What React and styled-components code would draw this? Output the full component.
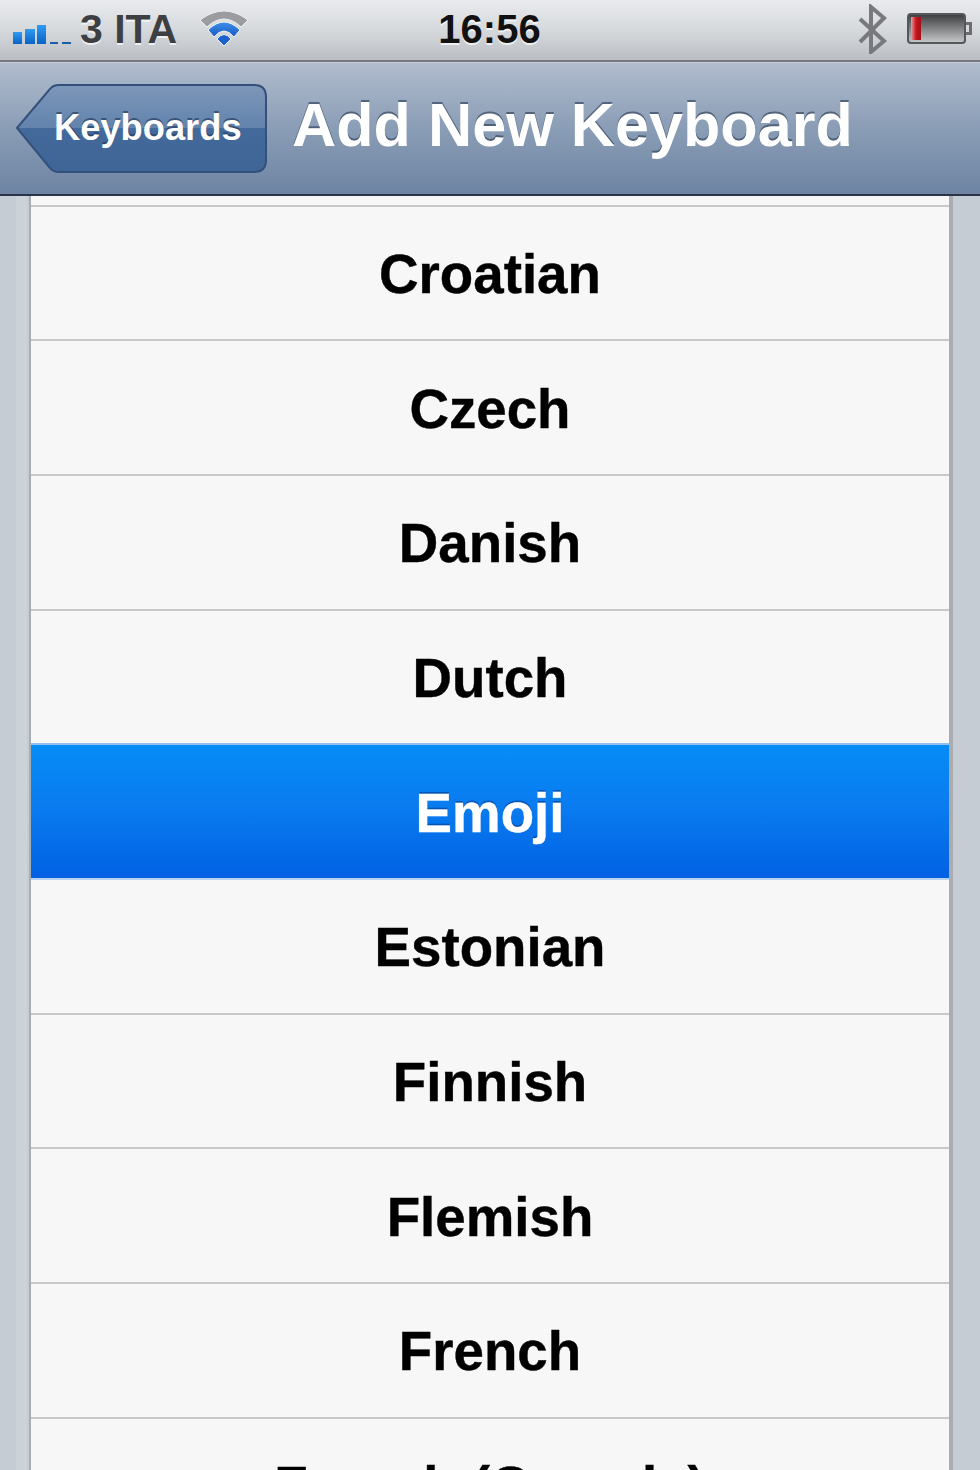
import React from 'react';
import styled, { createGlobalStyle } from 'styled-components';

const Global = createGlobalStyle`
  html, body {
    margin: 0;
    padding: 0;
    background: #c5ccd4;
  }
  * {
    box-sizing: border-box;
  }
`;

const Screen = styled.div`
  width: 980px;
  height: 1470px;
  overflow: hidden;
  display: flex;
  flex-direction: column;
  font-family: 'Liberation Sans', Arial, sans-serif;
`;

const StatusBar = styled.div`
  height: 62px;
  flex: none;
  display: grid;
  grid-template-columns: 1fr auto 1fr;
  align-items: center;
  padding: 0 7px 2px 12px;
  background: linear-gradient(#e9ebee, #d6d9dc 50%, #babec3);
  border-bottom: 2px solid #74787d;
`;

const StatusLeft = styled.div`
  display: flex;
  align-items: center;
`;

const StatusRight = styled.div`
  display: flex;
  align-items: center;
  justify-content: flex-end;
  gap: 20px;
`;

const Carrier = styled.span`
  margin: 0 22px 0 8px;
  font-size: 41px;
  font-weight: 700;
  color: #3d3f43;
  text-shadow: 0 2px 0 rgba(255, 255, 255, 0.7);
`;

const Clock = styled.span`
  margin-left: -6px;
  font-size: 40px;
  font-weight: 700;
  color: #111;
  text-shadow: 0 2px 0 rgba(255, 255, 255, 0.7);
`;

const NavBar = styled.div`
  height: 134px;
  flex: none;
  display: flex;
  align-items: center;
  gap: 25px;
  padding: 0 0 0 15px;
  background: linear-gradient(#b0bccd, #8a9db6 50%, #6d84a2);
  border-top: 1px solid #c5cfdb;
  border-bottom: 2px solid #2b3446;
`;

const BackButton = styled.button`
  position: relative;
  width: 252px;
  height: 89px;
  flex: none;
  padding: 0 0 2px 39px;
  border: 0;
  background: none;
  font: 700 36.3px 'Liberation Sans', Arial, sans-serif;
  color: #fff;
  text-align: left;
  text-shadow: 0 -2px 0 rgba(30, 50, 80, 0.6);
`;

const BackShape = styled.svg`
  position: absolute;
  top: 0;
  left: 0;
`;

const BackLabel = styled.span`
  position: relative;
`;

const Title = styled.h1`
  margin: 0 0 8px;
  font-size: 61.2px;
  font-weight: 700;
  color: #fff;
  white-space: nowrap;
  text-shadow: 0 -2px 0 rgba(40, 55, 80, 0.6);
`;

const Content = styled.div`
  flex: 1;
  min-height: 0;
  padding: 0 27px 0 29px;
  background: linear-gradient(
    90deg,
    #c5ccd4 16px,
    #cbd2d8 16px,
    #cbd2d8 27px,
    #c5ccd4 27px
  );
`;

const List = styled.div`
  height: 100%;
  overflow: hidden;
  background: #f7f7f7;
  border-left: 2px solid #a9acb0;
  border-right: 4px solid #a9acb0;
`;

const Sliver = styled.div`
  height: 10.6px;
  background: #f7f7f7;
  border-bottom: 2px solid #c8c8c8;
`;

const Row = styled.div`
  position: relative;
  height: 134.7px;
  display: flex;
  align-items: center;
  justify-content: center;
  padding-top: 2px;
  font-size: 54.7px;
  font-weight: 700;
  white-space: nowrap;
  -webkit-text-stroke: 0.4px currentColor;
  color: ${({ $selected }) => ($selected ? '#fff' : '#000')};
  background: ${({ $selected }) =>
    $selected ? 'linear-gradient(#058cf6, #0a7cf0 45%, #0061e3)' : '#f7f7f7'};
  border-bottom: 2px solid ${({ $selected }) => ($selected ? '#b8d4f2' : '#c8c8c8')};
  box-shadow: ${({ $selected }) => ($selected ? '0 -2px 0 #8fc0ee' : 'none')};
  text-shadow: ${({ $selected }) => ($selected ? '0 -2px 0 rgba(0, 40, 110, 0.45)' : 'none')};
`;

const rows = [
  'Croatian',
  'Czech',
  'Danish',
  'Dutch',
  'Emoji',
  'Estonian',
  'Finnish',
  'Flemish',
  'French',
  'French (Canada)',
];

const SignalIcon = () => (
  <svg width="60" height="30" viewBox="0 0 60 30">
    <defs>
      <linearGradient id="sig" x1="0" y1="0" x2="0" y2="1">
        <stop offset="0" stopColor="#2f9bf0" />
        <stop offset="1" stopColor="#0a62c8" />
      </linearGradient>
    </defs>
    <rect x="1" y="18" width="9" height="12" fill="url(#sig)" />
    <rect x="13" y="15" width="10" height="15" fill="url(#sig)" />
    <rect x="25" y="11" width="9" height="19" fill="url(#sig)" />
    <rect x="38" y="28" width="8" height="2" fill="#1c5fa8" />
    <rect x="50" y="28" width="9" height="2" fill="#1c5fa8" />
  </svg>
);

const WifiIcon = () => (
  <svg width="50" height="38" viewBox="0 0 50 38">
    <defs>
      <linearGradient id="wifi" x1="0" y1="0" x2="0" y2="1">
        <stop offset="0" stopColor="#3f8fea" />
        <stop offset="1" stopColor="#1659c4" />
      </linearGradient>
    </defs>
    <path d="M1 10 Q25 -8 49 10 L42 17 Q25 1 8 17 Z" fill="#9a9c9f" stroke="#eee" strokeWidth="1" />
    <path d="M9 20 Q25 4 41 20 L35 27 Q25 15 15 27 Z" fill="url(#wifi)" stroke="#f2f5f8" strokeWidth="1" />
    <path d="M18 29 Q25 20 32 29 L25 36 Z" fill="#1b62cc" stroke="#f2f5f8" strokeWidth="1" />
  </svg>
);

const BluetoothIcon = () => (
  <svg width="30" height="50" viewBox="0 0 30 50" fill="none">
    <path d="M3 15 L27 37 L14 48 V3 L27 14 L3 38" stroke="#77797c" strokeWidth="4" />
  </svg>
);

const BatteryIcon = () => (
  <svg width="66" height="32" viewBox="0 0 66 32">
    <defs>
      <linearGradient id="batt" x1="0" y1="0" x2="0" y2="1">
        <stop offset="0" stopColor="#3a3b3d" />
        <stop offset="1" stopColor="#c9cacb" />
      </linearGradient>
      <linearGradient id="charge" x1="0" y1="0" x2="1" y2="0">
        <stop offset="0" stopColor="#e8a0a0" />
        <stop offset="0.5" stopColor="#c8141e" />
        <stop offset="1" stopColor="#a01018" />
      </linearGradient>
    </defs>
    <rect x="1" y="1" width="57" height="29" rx="3" fill="url(#batt)" stroke="#55575a" strokeWidth="2" />
    <rect x="4" y="4" width="10" height="23" fill="url(#charge)" />
    <path d="M59 9 H65 V22 H59 Z" fill="#6a6c6f" />
    <rect x="59" y="12" width="3" height="7" fill="#d5d7d9" />
  </svg>
);

const BackOutline = () => (
  <BackShape width="252" height="89" viewBox="0 0 252 89">
    <defs>
      <linearGradient id="back" x1="0" y1="0" x2="0" y2="1">
        <stop offset="0" stopColor="#7d97b9" />
        <stop offset="0.5" stopColor="#6283ad" />
        <stop offset="0.5" stopColor="#44699b" />
        <stop offset="1" stopColor="#3f6597" />
      </linearGradient>
    </defs>
    <path
      d="M2 44 L35 5 Q38 1 44 1 H239 Q251 1 251 13 V76 Q251 88 239 88 H44 Q38 88 35 84 Z"
      fill="url(#back)"
      stroke="#34507a"
      strokeWidth="2"
    />
  </BackShape>
);

const App = () => {
  return (
    <Screen>
      <Global />
      <StatusBar>
        <StatusLeft>
          <SignalIcon />
          <Carrier>3 ITA</Carrier>
          <WifiIcon />
        </StatusLeft>
        <Clock>16:56</Clock>
        <StatusRight>
          <BluetoothIcon />
          <BatteryIcon />
        </StatusRight>
      </StatusBar>
      <NavBar>
        <BackButton>
          <BackOutline />
          <BackLabel>Keyboards</BackLabel>
        </BackButton>
        <Title>Add New Keyboard</Title>
      </NavBar>
      <Content>
        <List>
          <Sliver />
          {rows.map((name) => (
            <Row key={name} $selected={name === 'Emoji'}>
              {name}
            </Row>
          ))}
        </List>
      </Content>
    </Screen>
  );
};

export default App;
